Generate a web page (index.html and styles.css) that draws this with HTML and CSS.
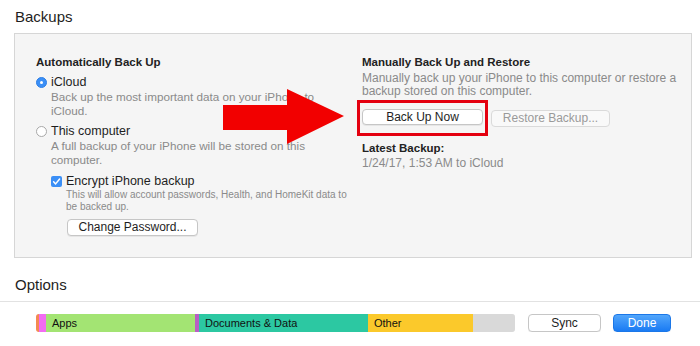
FILE: index.html
```html
<!DOCTYPE html>
<html lang="en">

<head>
    <meta charset="UTF-8">
    <meta name="viewport" content="width=device-width, initial-scale=1.0">
    <title>Backups</title>
    <link rel="stylesheet" href="styles.css">
</head>

<body>
    <!-- Backups section -->
    <h2 class="section-title">Backups</h2>

    <div class="backup-box">
        <!-- Left column: automatic backups -->
        <div class="col">
            <div class="heading">Automatically Back Up</div>

            <div class="option-row first">
                <span class="radio selected"></span>
                <span class="label">iCloud</span>
            </div>
            <div class="desc indent">Back up the most important data on your iPhone to<br>iCloud.</div>

            <div class="option-row">
                <span class="radio"></span>
                <span class="label">This computer</span>
            </div>
            <div class="desc indent">A full backup of your iPhone will be stored on this<br>computer.</div>

            <div class="option-row check-row">
                <span class="checkbox">
                    <svg width="11" height="11" viewBox="0 0 11 11">
                        <path d="M2.6 5.8 L4.6 7.9 L8.6 3" fill="none" stroke="#fff" stroke-width="1.5" stroke-linecap="round" stroke-linejoin="round"/>
                    </svg>
                </span>
                <span class="label">Encrypt iPhone backup</span>
            </div>
            <div class="desc small indent2">This will allow account passwords, Health, and HomeKit data to<br>be backed up.</div>

            <button class="btn pw-btn">Change Password...</button>
        </div>

        <!-- Right column: manual backups -->
        <div class="col">
            <div class="heading">Manually Back Up and Restore</div>
            <div class="desc manual-desc">Manually back up your iPhone to this computer or restore a<br>backup stored on this computer.</div>

            <div class="btn-row">
                <div class="highlight">
                    <button class="btn now-btn">Back Up Now</button>
                </div>
                <button class="btn restore-btn">Restore Backup...</button>
            </div>

            <div class="heading latest">Latest Backup:</div>
            <div class="desc date">1/24/17, 1:53 AM to iCloud</div>
        </div>

        <!-- Red annotation arrow -->
        <svg class="arrow" width="122" height="56" viewBox="0 0 122 56">
            <polygon points="0,16 64,16 64,0 121,27 64,55 64,41 0,41" fill="#f20000"/>
        </svg>
    </div>

    <!-- Options section -->
    <h2 class="section-title options-title">Options</h2>

    <div class="footer">
        <div class="storage">
            <div class="seg" style="width: 3px; background: #f48a52;"></div>
            <div class="seg" style="width: 7px; background: #f26cf2;"></div>
            <div class="seg named" style="width: 149px; background: #a3e473;">Apps</div>
            <div class="seg" style="width: 4px; background: #b95ec4;"></div>
            <div class="seg named" style="width: 169px; background: #2cc8a2;">Documents &amp; Data</div>
            <div class="seg named" style="width: 105px; background: #fbc92b;">Other</div>
            <div class="seg free"></div>
        </div>
        <button class="btn sync-btn">Sync</button>
        <button class="btn done-btn">Done</button>
    </div>
</body>

</html>
```

FILE: styles.css
```css
/* Page */
body {
    margin: 0;
    background: #fff;
    color: #222;
    font-family: "Liberation Sans", Arial, sans-serif;
    font-size: 12px;
}

.section-title {
    margin: 0;
    padding: 8px 0 0 15px;
    height: 25px;
    font-size: 15px;
    font-weight: normal;
    line-height: 18px;
    color: #1e1e1e;
}

/* Backups box */
.backup-box {
    position: relative;
    margin-top: 0;
    margin-left: 14px;
    width: 678px;
    height: 225px;
    background: #f5f5f5;
    border: 1px solid #d6d6d6;
    display: grid;
    grid-template-columns: 326px 1fr;
    padding: 21px 0 0 21px;
    box-sizing: border-box;
}

.heading {
    line-height: 14px;
    font-weight: bold;
    font-size: 11.5px;
    color: #222;
}

.desc {
    color: #8a8a8a;
    line-height: 14px;
    white-space: nowrap;
}

.desc.indent {
    font-size: 11.7px;
}

.desc.small {
    font-size: 10px;
    line-height: 12px;
}

.indent {
    padding-left: 15px;
}

.indent2 {
    padding-left: 30px;
}

.option-row {
    display: flex;
    align-items: center;
    height: 16px;
    margin-top: 5px;
}

.option-row.check-row {
    margin-top: 6px;
    padding-left: 15px;
}

.label {
    margin-left: 4px;
    font-size: 12.5px;
    color: #1e1e1e;
}

.radio {
    width: 11px;
    height: 11px;
    border-radius: 50%;
    background: #fff;
    border: 1px solid #a8a8a8;
    box-sizing: border-box;
}

.radio.selected {
    background: #3b8ff6;
    border-color: #2e7fe6;
    position: relative;
}

.radio.selected::after {
    content: "";
    position: absolute;
    left: 3px;
    top: 3px;
    width: 3px;
    height: 3px;
    border-radius: 50%;
    background: #fff;
}

.checkbox {
    width: 11px;
    height: 11px;
    border-radius: 2px;
    background: #3b8ff6;
    display: flex;
}

/* Buttons */
.btn {
    font-family: inherit;
    font-size: 12px;
    color: #1e1e1e;
    background: #fff;
    border: 1px solid #c6c6c6;
    border-radius: 4px;
    box-shadow: 0 1px 0 rgba(0, 0, 0, 0.06);
    padding: 0;
    height: 17px;
    line-height: 15px;
}

.pw-btn {
    margin: 6px 0 0 31px;
    width: 131px;
}

.manual-desc {
    margin-top: 3px;
    line-height: 13px;
}

.btn-row {
    display: flex;
    align-items: flex-start;
    margin-top: 2px;
}

.highlight {
    border: 3px solid #e4000f;
    padding: 6px 2px 8px 2px;
    margin-left: -5px;
}

.now-btn {
    width: 121px;
    height: 16px;
    line-height: 14px;
}

.restore-btn {
    margin: 10px 0 0 3px;
    width: 119px;
    color: #9a9a9a;
    border-color: #dadada;
    background: #f9f9f9;
    box-shadow: none;
}

.latest {
    margin-top: 5px;
}

.date {
    margin-top: 1px;
}

.arrow {
    position: absolute;
    left: 208px;
    top: 55px;
}

/* Options */
.options-title {
    margin-top: 16px;
    padding-top: 2px;
    height: 25px;
    border-bottom: 1px solid #e2e2e2;
}

.footer {
    display: flex;
    align-items: center;
    padding: 12px 0 0 36px;
}

.storage {
    display: flex;
    width: 479px;
    height: 18px;
    border-radius: 3px;
    overflow: hidden;
    box-shadow: inset 0 0 0 1px rgba(0, 0, 0, 0.06);
}

.seg {
    height: 18px;
    font-size: 11px;
    line-height: 18px;
    box-sizing: border-box;
    color: #111;
    white-space: nowrap;
    flex-shrink: 0;
}

.seg.named {
    padding-left: 6px;
}

.seg.free {
    flex: 1;
    background: #d9d9d9;
}

.sync-btn {
    margin-left: 13px;
    width: 73px;
    height: 18px;
}

.done-btn {
    margin-left: 12px;
    width: 58px;
    height: 18px;
    color: #fff;
    border-color: #1b77e8;
    background: linear-gradient(#52a6fb, #1a7bf3);
}
```
